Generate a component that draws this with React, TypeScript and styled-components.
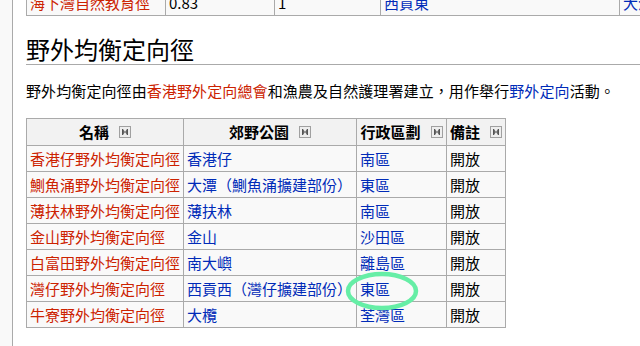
import styled, { createGlobalStyle } from 'styled-components';

const GlobalStyle = createGlobalStyle`
  html, body {
    margin: 0;
    padding: 0;
    background: #f9f9f9;
  }
  body {
    font-family: "Noto Sans CJK TC", "Noto Sans", sans-serif;
    color: #000;
  }
`;

const Page = styled.div`
  position: relative;
  width: 640px;
  height: 346px;
  overflow: hidden;
  display: flex;
`;

const Gutter = styled.div`
  width: 12px;
  flex-shrink: 0;
  background: #f9f9f9;
`;

const Content = styled.div`
  flex: 1;
  min-width: 0;
  overflow: hidden;
  background: #fff;
  border-left: 1px solid #aaa;
  padding-left: 13px;
  margin-top: -11px;
  font-size: 15px;
`;

const Table = styled.table<{ $width?: number }>`
  border-collapse: collapse;
  border: 1px solid #aaa;
  background: #f9f9f9;
  table-layout: fixed;
  width: ${p => (p.$width ? `${p.$width}px` : 'auto')};
`;

const Cell = styled.td<{ $w?: number }>`
  border: 1px solid #aaa;
  padding: 3px;
  line-height: 19px;
  height: 19px;
  white-space: nowrap;
  overflow: hidden;
  vertical-align: middle;
  width: ${p => (p.$w ? `${p.$w}px` : 'auto')};
`;

const HeadCell = styled.th<{ $w: number }>`
  border: 1px solid #aaa;
  background: #f2f2f2;
  padding: 3px;
  line-height: 20px;
  height: 20px;
  font-weight: 700;
  text-align: center;
  white-space: nowrap;
  width: ${p => p.$w}px;
`;

const HeadInner = styled.span`
  display: inline-flex;
  align-items: center;
  gap: 10px;
`;

const RedLink = styled.span`
  color: #cc2200;
`;

const BlueLink = styled.span`
  color: #002bb8;
`;

const Heading = styled.h2`
  margin: 18px 0 0;
  padding: 0;
  font-size: 24px;
  font-weight: 400;
  line-height: 30px;
  border-bottom: 1px solid #aaa;
`;

const Para = styled.p`
  margin: 16px 0 17px;
  line-height: 20px;
  letter-spacing: 0.1px;
  white-space: nowrap;
`;

const Annotation = styled.svg`
  position: absolute;
  left: 343px;
  top: 270px;
  pointer-events: none;
`;

const SortIcon = () => (
  <svg width="12" height="12" viewBox="0 0 12 12">
    <rect x="0.5" y="0.5" width="11" height="11" fill="#eee" stroke="#a0a0a0" />
    <rect x="3" y="3" width="1" height="6" fill="#555" />
    <rect x="8" y="3" width="1" height="6" fill="#555" />
    <polygon points="4,3 6,6 4,9" fill="#666" />
    <polygon points="8,3 6,6 8,9" fill="#666" />
  </svg>
);

const rows: [string, string, string][] = [
  ['香港仔野外均衡定向徑', '香港仔', '南區'],
  ['鰂魚涌野外均衡定向徑', '大潭（鰂魚涌擴建部份）', '東區'],
  ['薄扶林野外均衡定向徑', '薄扶林', '南區'],
  ['金山野外均衡定向徑', '金山', '沙田區'],
  ['白富田野外均衡定向徑', '南大嶼', '離島區'],
  ['灣仔野外均衡定向徑', '西貢西（灣仔擴建部份）', '東區'],
  ['牛寮野外均衡定向徑', '大欖', '荃灣區'],
];

export default function App() {
  return (
    <>
      <GlobalStyle />
      <Page>
        <Gutter />
        <Content>
          <Table $width={701}>
            <tbody>
              <tr>
                <Cell $w={132}><RedLink>海下灣自然教育徑</RedLink></Cell>
                <Cell $w={102}>0.83</Cell>
                <Cell $w={99}>1</Cell>
                <Cell $w={232}><BlueLink>西貢東</BlueLink></Cell>
                <Cell $w={100}><BlueLink>大浪西灣</BlueLink></Cell>
              </tr>
            </tbody>
          </Table>
          <Heading>野外均衡定向徑</Heading>
          <Para>
            野外均衡定向徑由<RedLink>香港野外定向總會</RedLink>和漁農及自然護理署建立，用作舉行<BlueLink>野外定向</BlueLink>活動。
          </Para>
          <Table>
            <thead>
              <tr>
                <HeadCell $w={150}><HeadInner>名稱<SortIcon /></HeadInner></HeadCell>
                <HeadCell $w={166}><HeadInner>郊野公園<SortIcon /></HeadInner></HeadCell>
                <HeadCell $w={83}><HeadInner>行政區劃<SortIcon /></HeadInner></HeadCell>
                <HeadCell $w={52}><HeadInner>備註<SortIcon /></HeadInner></HeadCell>
              </tr>
            </thead>
            <tbody>
              {rows.map(([name, park, district]) => (
                <tr key={name}>
                  <Cell><RedLink>{name}</RedLink></Cell>
                  <Cell><BlueLink>{park}</BlueLink></Cell>
                  <Cell><BlueLink>{district}</BlueLink></Cell>
                  <Cell>開放</Cell>
                </tr>
              ))}
            </tbody>
          </Table>
        </Content>
        <Annotation width="78" height="42" viewBox="0 0 78 42">
          <ellipse cx="39" cy="21" rx="34" ry="17" fill="none" stroke="#66eea6" strokeWidth="4.5" />
        </Annotation>
      </Page>
    </>
  );
}
